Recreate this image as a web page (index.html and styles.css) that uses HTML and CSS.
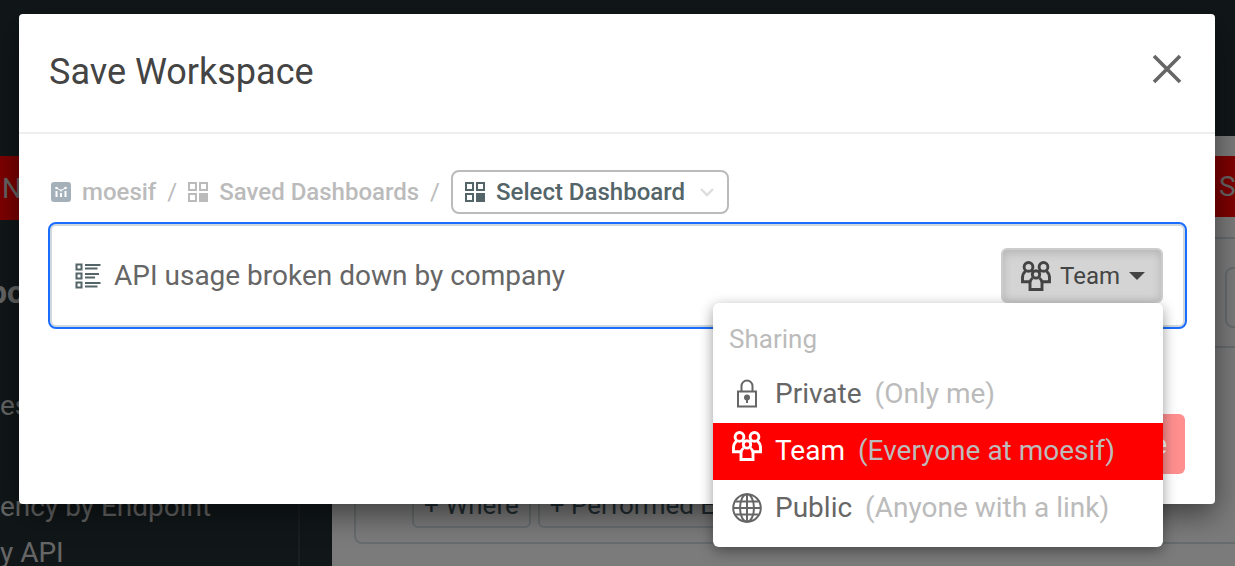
FILE: index.html
```html
<!DOCTYPE html>
<html lang="en">
<head>
    <meta charset="UTF-8">
    <meta name="viewport" content="width=device-width, initial-scale=1.0">
    <title>Save Workspace</title>
    <link rel="stylesheet" href="styles.css">
</head>
<body>
    <svg class="sprite" aria-hidden="true">
        <symbol id="icon-dashboard" viewBox="0 0 20 20">
            <path d="M1 1h7v7H1zM12 1h7v7h-7zM1 12h7v7H1z" fill="none" stroke="currentColor" stroke-width="2"/>
            <path d="M11 11h9v9h-9z" fill="currentColor"/>
        </symbol>
        <symbol id="icon-team" viewBox="0 0 30 30">
            <g fill="none" stroke="currentColor" stroke-width="2.9">
                <circle cx="7.5" cy="5.900" r="4.4"/>
                <circle cx="22.5" cy="5.900" r="4.4"/>
                <circle cx="15" cy="13.4" r="3.7"/>
                <path d="M4.500 10C2.300 12 1.500 14.500 1.500 17v3.800h7.500M25.500 10C27.700 12 28.500 14.500 28.500 17v3.800h-7.500"/>
                <path d="M10.500 9.500l2 1.500M19.500 9.500l-2 1.500"/>
                <path d="M11.500 17c-1.800 1.500-2.500 3-2.500 5v6.500h12V22c0-2-.7-3.500-2.500-5"/>
            </g>
        </symbol>
    </svg>

    <div class="app">
        <header class="topbar"></header>
        <div class="layout">
            <aside class="sidebar">
                <button class="new-btn">N</button>
                <nav>
                    <h3>po</h3>
                    <a href="#">es</a>
                    <a href="#">ency by Endpoint</a>
                    <a href="#">y API</a>
                </nav>
            </aside>
            <main class="content">
                <div class="actions">
                    <button class="save-as">S</button>
                </div>
                <section class="panel">
                    <div class="panel-head"><div class="picker"></div></div>
                    <div class="filters">
                        <button>+ Where</button>
                        <button>+ Performed Event</button>
                    </div>
                </section>
                <div class="tabs">
                    <div class="tab"></div>
                    <div class="tab tab-wide"></div>
                </div>
            </main>
        </div>
    </div>

    <div class="backdrop">
        <div class="modal" role="dialog" aria-labelledby="modal-title">
            <div class="modal-header">
                <h1 id="modal-title">Save Workspace</h1>
                <button class="close" aria-label="Close">
                    <svg width="30" height="30" viewBox="0 0 30 30"><path d="M2 2l26 26M28 2L2 28" stroke="currentColor" stroke-width="3.6"/></svg>
                </button>
            </div>
            <div class="modal-body">
                <div class="breadcrumb">
                    <svg width="20" height="20" viewBox="0 0 20 20">
                        <rect width="20" height="20" rx="3" fill="#a5b1ba"/>
                        <path d="M5.500 9v6M10 11v4M14.500 9v6" stroke="#fff" stroke-width="2"/>
                        <path d="M5.500 6L10 8.500L14.500 6" fill="none" stroke="#fff"/>
                        <circle cx="5.500" cy="6" r="1.300" fill="#fff"/>
                        <circle cx="10" cy="8.500" r="1" fill="#fff"/>
                        <circle cx="14.500" cy="6" r="1.300" fill="#fff"/>
                    </svg>
                    <a href="#">moesif</a>
                    <span class="slash">/</span>
                    <svg width="20" height="20"><use href="#icon-dashboard"/></svg>
                    <a href="#">Saved Dashboards</a>
                    <span class="slash">/</span>
                    <label class="dashboard-select">
                        <svg width="20" height="20"><use href="#icon-dashboard"/></svg>
                        <select aria-label="Dashboard">
                            <option>Select Dashboard</option>
                        </select>
                        <svg class="chevron" width="14" height="10" viewBox="0 0 14 10"><path d="M1 2l6 6 6-6" fill="none" stroke="currentColor" stroke-width="2.4"/></svg>
                    </label>
                </div>

                <div class="name-field">
                    <svg width="26" height="26" viewBox="0 0 26 26" fill="none" stroke="currentColor" stroke-width="2">
                        <path d="M1.500 1.500h5v5h-5zM1.500 10.500h5v5h-5zM1.500 19.500h5v5h-5z"/>
                        <path d="M10 2h15.500M10 5.500h12.500M10 11h14M10 14.500h10M10 20h15.500M10 23.500h12.500" stroke-width="1.800"/>
                    </svg>
                    <input type="text" aria-label="Workspace name" value="API usage broken down by company">
                    <div class="sharing">
                        <button class="sharing-btn" aria-expanded="true">
                            <svg width="30" height="30"><use href="#icon-team"/></svg>
                            Team
                            <span class="caret"></span>
                        </button>
                        <div class="sharing-menu">
                            <h6>Sharing</h6>
                            <button>
                                <svg width="30" height="30" viewBox="0 0 30 30" fill="none" stroke="currentColor" stroke-width="2">
                                    <path d="M6 12.500h18v15H6z"/>
                                    <path d="M9.500 12.500V7a5.500 5.500 0 0 1 11 0v5.500"/>
                                    <circle cx="15" cy="18.500" r="2" fill="currentColor"/>
                                    <path d="M15 19v5"/>
                                </svg>
                                Private <span>(Only me)</span>
                            </button>
                            <button class="active">
                                <svg width="30" height="30"><use href="#icon-team"/></svg>
                                Team <span>(Everyone at moesif)</span>
                            </button>
                            <button>
                                <svg width="30" height="30" viewBox="0 0 30 30" fill="none" stroke="currentColor" stroke-width="2">
                                    <circle cx="15" cy="15" r="13.800"/>
                                    <ellipse cx="15" cy="15" rx="7" ry="13.800"/>
                                    <path d="M15 1v28M1 15h28M3.500 8.500h23M3.500 21.500h23"/>
                                </svg>
                                Public <span>(Anyone with a link)</span>
                            </button>
                        </div>
                    </div>
                </div>
            </div>
            <div class="modal-footer">
                <button class="save-btn" disabled>Save</button>
            </div>
        </div>
    </div>
</body>
</html>
```
FILE: styles.css
```css
* {
    box-sizing: border-box;
}

body {
    margin: 0;
    font-family: Roboto, "Liberation Sans", sans-serif;
    font-size: 28px;
    color: #666;
}

button, input, select {
    font: inherit;
    color: inherit;
    margin: 0;
}

button {
    cursor: pointer;
}

a {
    color: inherit;
    text-decoration: none;
}

svg {
    flex-shrink: 0;
}

.sprite {
    display: none;
}

/* page behind the modal */
.app {
    height: 100vh;
    overflow: hidden;
    background-color: #f6f6f6;
}

.topbar {
    height: 136px;
    background-color: #222e32;
}

.layout {
    display: flex;
}

.sidebar {
    width: 332px;
    height: 480px;
    padding: 20px 32px 0 0;
    background-color: #222e32;
    flex-shrink: 0;
}

.new-btn {
    display: block;
    width: 100%;
    height: 64px;
    padding: 0 2px;
    border: none;
    background-color: #f00;
    color: #ccc;
    text-align: left;
}

.sidebar nav {
    height: 396px;
    padding-top: 48px;
    border-right: 2px solid #333c40;
    color: #ccc;
}

.sidebar h3 {
    margin: 0 0 67px -11px;
    font-size: 32px;
    line-height: 48px;
}

.sidebar a {
    display: block;
    line-height: 46px;
}

.sidebar a:nth-of-type(1) {
    margin-bottom: 55px;
}

.content {
    flex: 1;
    min-width: 0;
    padding: 20px 0 0 22px;
}

.actions {
    display: flex;
    justify-content: flex-end;
}

.save-as {
    width: 120px;
    height: 61px;
    padding: 0 8px;
    margin-right: -96px;
    border: none;
    background-color: #f00;
    color: #ccc;
    text-align: left;
}

.panel {
    margin: 20px -20px 0 0;
    border: 2px solid #cfd8dc;
    border-radius: 8px;
}

.panel-head {
    display: flex;
    justify-content: flex-end;
    padding: 28px 0 18px;
    border-bottom: 2px solid #cfd8dc;
}

.picker {
    width: 28px;
    height: 61px;
    border: 2px solid #cfd8dc;
    border-radius: 8px;
}

.filters {
    display: flex;
    gap: 7px;
    padding: 134px 0 14px 56px;
}

.filters button {
    height: 46px;
    padding: 0 10px;
    border: 2px solid #cfd8dc;
    border-radius: 6px;
    background: none;
    color: #455a64;
    font-size: 26px;
    line-height: 40px;
}

.tabs {
    display: flex;
    gap: 10px;
    margin-top: 22px;
}

.tab {
    width: 208px;
    height: 60px;
    border: 1px solid #daa;
    border-radius: 6px;
}

.tab-wide {
    width: 274px;
}

/* modal */
.backdrop {
    position: absolute;
    inset: 0;
    padding: 14px 20px 0 19px;
    background-color: rgba(0, 0, 0, 0.5);
}

.modal {
    border-radius: 4px;
    background-color: #fff;
    box-shadow: 0 10px 30px rgba(0, 0, 0, 0.5);
}

.modal-header {
    display: flex;
    align-items: flex-start;
    justify-content: space-between;
    height: 120px;
    padding: 40px 33px 0 30px;
    border-bottom: 2px solid #eee;
}

.modal-header h1 {
    margin: 0;
    font-size: 36px;
    font-weight: 400;
    line-height: 36px;
    color: #444;
}

.close {
    padding: 0;
    border: none;
    background: none;
    line-height: 0;
}

.modal-body {
    padding: 36px 30px 0 31px;
}

.breadcrumb {
    display: flex;
    align-items: center;
    gap: 11px;
    height: 44px;
    padding-left: 1px;
    font-size: 24px;
    font-weight: 500;
    color: #bbb;
}

.slash {
    font-weight: 400;
}

.dashboard-select {
    display: flex;
    align-items: center;
    gap: 11px;
    height: 44px;
    padding: 0 13px 0 12px;
    border: 2px solid #bbb;
    border-radius: 8px;
    color: #546569;
}

.dashboard-select select {
    appearance: none;
    padding: 0;
    border: none;
    background: none;
    outline: none;
}

.chevron {
    color: #ddd;
    margin-left: 4px;
}

.name-field {
    display: flex;
    align-items: center;
    gap: 13px;
    height: 103px;
    margin-top: 10px;
    padding: 0 20px 0 23px;
    border: 2px solid #cfd8dc;
    border-radius: 6px;
    outline: 2px solid #1a6dff;
    color: #546569;
}

.name-field input {
    flex: 1;
    min-width: 0;
    padding: 0;
    border: none;
    outline: none;
    color: #666;
}

.sharing {
    position: relative;
}

.sharing-btn {
    display: flex;
    align-items: center;
    gap: 9px;
    height: 55px;
    padding: 0 16px 0 18px;
    border: 2px solid #ccc;
    border-radius: 6px;
    background-color: #d4d4d4;
    box-shadow: inset 0 3px 10px rgba(0, 0, 0, 0.15);
    color: #444;
    font-size: 24px;
}

.caret {
    border: 8px solid transparent;
    border-top-color: #444;
    border-bottom: none;
}

.sharing-menu {
    position: absolute;
    top: 100%;
    right: 0;
    width: 450px;
    padding: 10px 0;
    border-radius: 6px;
    background-color: #fff;
    box-shadow: 0 4px 14px rgba(0, 0, 0, 0.4);
    color: #666;
}

.sharing-menu h6 {
    margin: 0;
    padding: 0 16px;
    font-size: 26px;
    font-weight: 400;
    line-height: 53px;
    color: #bbb;
}

.sharing-menu button {
    display: flex;
    align-items: center;
    gap: 13px;
    width: 100%;
    height: 57px;
    padding: 8px 19px 10px;
    border: none;
    background: none;
    white-space: nowrap;
}

.sharing-menu span {
    color: #bbb;
}

.sharing-menu .active {
    background-color: #f00;
    color: #fff;
}

.sharing-menu .active svg {
    align-self: flex-start;
}

.modal-footer {
    display: flex;
    justify-content: flex-end;
    padding: 87px 30px 30px;
}

.save-btn {
    height: 60px;
    padding: 0 18px;
    border: none;
    border-radius: 6px;
    background-color: #ff8f8f;
    color: #fff;
}
```
